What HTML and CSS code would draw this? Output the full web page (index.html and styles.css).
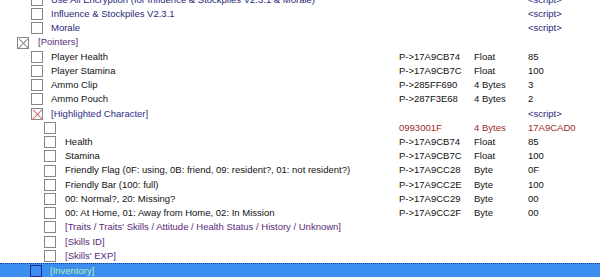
FILE: index.html
```html
<!DOCTYPE html>
<html lang="en">
<head>
  <meta charset="UTF-8">
  <title>Cheat Table</title>
  <link rel="stylesheet" href="styles.css">
</head>
<body>
  <div class="table-list">
    <div class="row lv1 script"><span class="desc"><i class="box"></i>Use All Encryption (for Influence &amp; Stockpiles V2.3.1 &amp; Morale)</span><span></span><span></span><span class="val">&lt;script&gt;</span></div>
    <div class="row lv1 script"><span class="desc"><i class="box"></i>Influence &amp; Stockpiles V2.3.1</span><span></span><span></span><span class="val">&lt;script&gt;</span></div>
    <div class="row lv1 script"><span class="desc"><i class="box"></i>Morale</span><span></span><span></span><span class="val">&lt;script&gt;</span></div>
    <div class="row lv0 group"><span class="desc"><i class="box checked"></i>[Pointers]</span><span></span><span></span><span></span></div>
    <div class="row lv1"><span class="desc"><i class="box"></i>Player Health</span><span>P-&gt;17A9CB74</span><span>Float</span><span>85</span></div>
    <div class="row lv1"><span class="desc"><i class="box"></i>Player Stamina</span><span>P-&gt;17A9CB7C</span><span>Float</span><span>100</span></div>
    <div class="row lv1"><span class="desc"><i class="box"></i>Ammo Clip</span><span>P-&gt;285FF690</span><span>4 Bytes</span><span>3</span></div>
    <div class="row lv1"><span class="desc"><i class="box"></i>Ammo Pouch</span><span>P-&gt;287F3E68</span><span>4 Bytes</span><span>2</span></div>
    <div class="row lv1 group-blue"><span class="desc"><i class="box checked red"></i>[Highlighted Character]</span><span></span><span></span><span class="val script-val">&lt;script&gt;</span></div>
    <div class="row lv2 base"><span class="desc"><i class="box"></i></span><span>0993001F</span><span>4 Bytes</span><span>17A9CAD0</span></div>
    <div class="row lv2"><span class="desc"><i class="box"></i>Health</span><span>P-&gt;17A9CB74</span><span>Float</span><span>85</span></div>
    <div class="row lv2"><span class="desc"><i class="box"></i>Stamina</span><span>P-&gt;17A9CB7C</span><span>Float</span><span>100</span></div>
    <div class="row lv2"><span class="desc"><i class="box"></i>Friendly Flag (0F: using, 0B: friend, 09: resident?, 01: not resident?)</span><span>P-&gt;17A9CC28</span><span>Byte</span><span>0F</span></div>
    <div class="row lv2"><span class="desc"><i class="box"></i>Friendly Bar (100: full)</span><span>P-&gt;17A9CC2E</span><span>Byte</span><span>100</span></div>
    <div class="row lv2"><span class="desc"><i class="box"></i>00: Normal?, 20: Missing?</span><span>P-&gt;17A9CC29</span><span>Byte</span><span>00</span></div>
    <div class="row lv2"><span class="desc"><i class="box"></i>00: At Home, 01: Away from Home, 02: In Mission</span><span>P-&gt;17A9CC2F</span><span>Byte</span><span>00</span></div>
    <div class="row lv2 group"><span class="desc"><i class="box"></i>[Traits / Traits' Skills / Attitude / Health Status / History / Unknown]</span><span></span><span></span><span></span></div>
    <div class="row lv2 group"><span class="desc"><i class="box"></i>[Skills ID]</span><span></span><span></span><span></span></div>
    <div class="row lv2 group"><span class="desc"><i class="box"></i>[Skills' EXP]</span><span></span><span></span><span></span></div>
    <div class="row lv1 selected"><span class="desc"><i class="box"></i>[Inventory]</span><span></span><span></span><span></span></div>
  </div>
</body>
</html>
```
FILE: styles.css
```css
body {
  margin: 0;
  background: #fff;
  font-family: "Liberation Sans", Arial, sans-serif;
  font-size: 9.5px;
  color: #111;
  overflow: hidden;
}
.table-list { margin-top: -7.2px; }

.row {
  display: grid;
  grid-template-columns: 399px 75px 54px 1fr;
  height: 14.22px;
  line-height: 14.22px;
  white-space: nowrap;
  box-sizing: border-box;
}
.row > span { overflow: visible; }
.desc { display: flex; align-items: center; }

.box {
  display: inline-block;
  width: 12px; height: 12px;
  box-sizing: border-box;
  border: 1px solid #858585;
  background: #fff;
  margin-right: 8px;
  flex: none;
  position: relative;
}
.box.checked::before, .box.checked::after {
  content: "";
  position: absolute; left: 4.5px; top: -1px;
  width: 1px; height: 12.5px;
  background: #8a8a8a;
  transform: rotate(45deg);
}
.box.checked::after { transform: rotate(-45deg); }
.box.checked.red::before, .box.checked.red::after { background: #d06a6a; }

.lv0 .desc { padding-left: 17px; }
.lv0 .box { margin-right: 9px; }
.lv1 .desc { padding-left: 31px; }
.lv2 .desc { padding-left: 44px; }
.lv2 .box { margin-right: 9px; }

.script .desc, .script .val { color: #262878; }
.group .desc { color: #5b2a7a; }
.group-blue .desc { color: #2e2e86; }
.script-val { color: #262878; }
.base { color: #9a2a2a; }

.selected {
  background: #3c8ef0;
  border-top: 1px dotted #1c3c9c;
  color: #aef0b0;
}
.selected .box { border-color: #1a2c80; background: #3c8ef0; }
.selected .desc { padding-left: 30px; }
```
